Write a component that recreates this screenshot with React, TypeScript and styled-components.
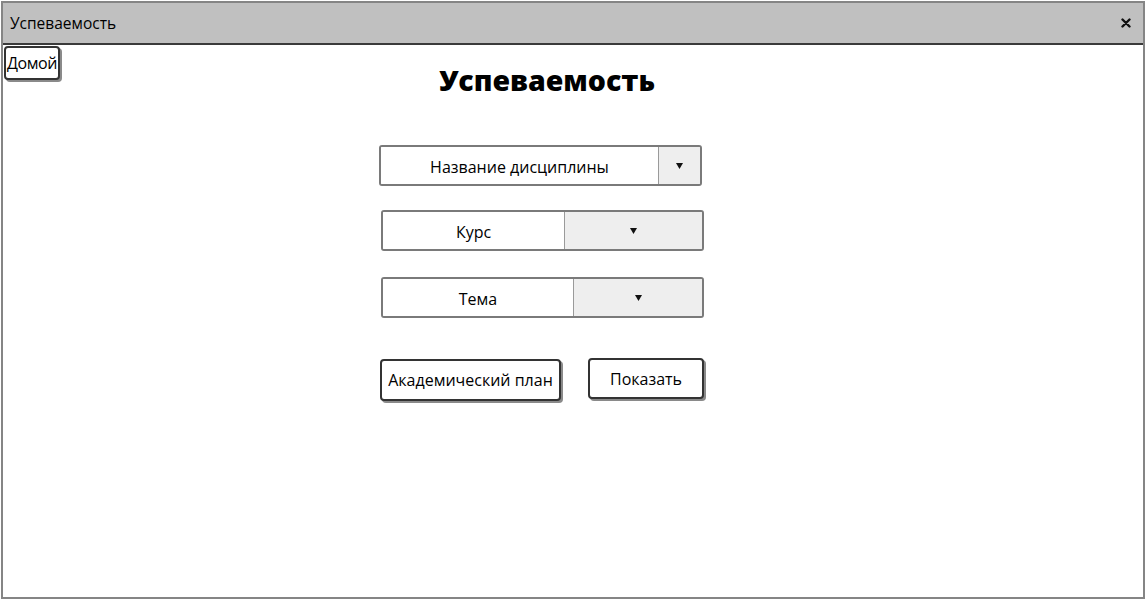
import React from "react";
import styled, { createGlobalStyle } from "styled-components";

const Global = createGlobalStyle`
  html, body { margin: 0; padding: 0; background: #fff; }
  body { font-family: "Open Sans", "DejaVu Sans", sans-serif; color: #000; }
  * { box-sizing: border-box; }
`;

const Window = styled.div`
  margin: 1px 0 0 1px;
  width: 1144px;
  height: 598px;
  border: 2px solid #858585;
  display: flex;
  flex-direction: column;
  background: #fff;
`;

const TitleBar = styled.div`
  height: 42px;
  background: #c0c0c0;
  border-bottom: 2px solid #3a3a3a;
  display: flex;
  align-items: center;
  justify-content: space-between;
  padding: 0 12px 1px 7px;
  font-size: 15.5px;
`;

const Content = styled.div`
  flex: 1;
  display: flex;
  align-items: flex-start;
  padding: 1px 0 0 1px;
`;

const HomeButton = styled.button`
  width: 56px;
  height: 34px;
  padding: 0;
  margin: 0;
  border: 2px solid #333;
  border-radius: 4px;
  background: #fff;
  box-shadow: 2px 2px 0 #8a8a8a;
  font-family: inherit;
  font-size: 16px;
  color: #000;
  display: flex;
  align-items: center;
  justify-content: center;
  letter-spacing: -0.4px;
  white-space: nowrap;
  overflow: visible;
`;

const Main = styled.div`
  margin-left: 319px;
  display: flex;
  flex-direction: column;
  align-items: flex-start;
`;

const Heading = styled.h1`
  margin: 17px 0 0 0;
  width: 336px;
  text-align: center;
  font-size: 28.5px;
  line-height: 34px;
  font-weight: 800;
`;

const Combo = styled.div<{ $shift: number; $top: number; $left: number }>`
  margin-left: ${(p) => p.$shift}px;
  margin-top: ${(p) => p.$top}px;
  width: 323px;
  height: 41px;
  border: 2px solid #7a7a7a;
  border-radius: 3px;
  display: grid;
  grid-template-columns: ${(p) => p.$left}px 1fr;
  overflow: hidden;
`;

const ComboLabel = styled.div`
  display: flex;
  align-items: center;
  justify-content: center;
  padding-top: 2px;
  font-size: 16px;
  border-right: 1px solid #9a9a9a;
  background: #fff;
`;

const ComboArrow = styled.div`
  background: #eeeeee;
  display: flex;
  align-items: center;
  justify-content: center;
`;

const Actions = styled.div`
  margin-top: 40px;
  display: flex;
  align-items: flex-start;
  gap: 27px;
  margin-left: 1px;
`;

const ActionButton = styled.button<{ $w: number; $h: number; $dy: number }>`
  width: ${(p) => p.$w}px;
  height: ${(p) => p.$h}px;
  margin-top: ${(p) => p.$dy}px;
  padding: 0;
  border: 2px solid #333;
  border-radius: 4px;
  background: #fff;
  box-shadow: 2px 2px 0 #8a8a8a;
  font-family: inherit;
  font-size: 16px;
  color: #000;
  white-space: nowrap;
`;

const Arrow = () => (
  <svg width="7" height="6" viewBox="0 0 7 6">
    <polygon points="0,0 7,0 3.5,6" fill="#111" />
  </svg>
);

const Close = () => (
  <svg width="10" height="10" viewBox="0 0 10 10">
    <path d="M1.5 1.5 L8.5 8.5 M8.5 1.5 L1.5 8.5" stroke="#111" strokeWidth="2.4" strokeLinecap="round" />
  </svg>
);

export default function App() {
  return (
    <>
      <Global />
      <Window>
        <TitleBar>
          <span>Успеваемость</span>
          <Close />
        </TitleBar>
        <Content>
          <HomeButton>Домой</HomeButton>
          <Main>
            <Heading>Успеваемость</Heading>
            <Combo $shift={0} $top={48} $left={278}>
              <ComboLabel>Название дисциплины</ComboLabel>
              <ComboArrow>
                <Arrow />
              </ComboArrow>
            </Combo>
            <Combo $shift={2} $top={24} $left={182}>
              <ComboLabel>Курс</ComboLabel>
              <ComboArrow>
                <Arrow />
              </ComboArrow>
            </Combo>
            <Combo $shift={2} $top={26} $left={191}>
              <ComboLabel>Тема</ComboLabel>
              <ComboArrow>
                <Arrow />
              </ComboArrow>
            </Combo>
            <Actions>
              <ActionButton $w={181} $h={42} $dy={1}>Академический план</ActionButton>
              <ActionButton $w={116} $h={41} $dy={0}>Показать</ActionButton>
            </Actions>
          </Main>
        </Content>
      </Window>
    </>
  );
}
